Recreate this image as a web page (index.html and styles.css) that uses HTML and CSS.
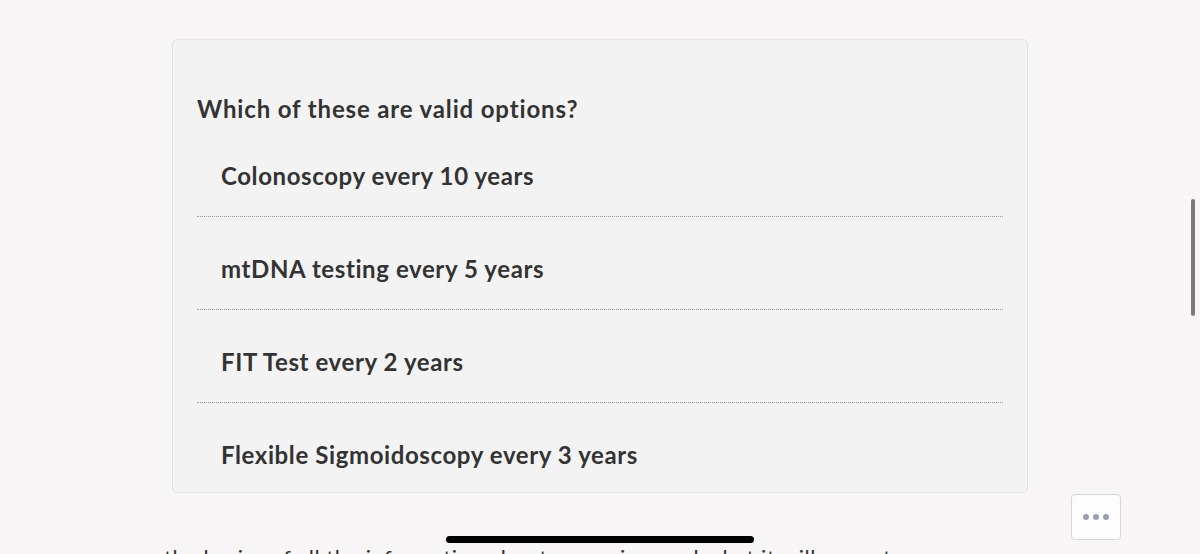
FILE: index.html
```html
<!DOCTYPE html>
<html lang="en">
<head>
<meta charset="utf-8">
<title>Quiz</title>
<link rel="stylesheet" href="styles.css">
</head>
<body>
<main class="page">
  <section class="card">
    <h2 class="question">Which of these are valid options?</h2>
    <ul class="options">
      <li class="option">Colonoscopy every 10 years</li>
      <li class="option">mtDNA testing every 5 years</li>
      <li class="option">FIT Test every 2 years</li>
      <li class="option">Flexible Sigmoidoscopy every 3 years</li>
    </ul>
  </section>
  <div class="below">
    <p class="body-text">the basics of all the information about screening, and what it will mean to you</p>
    <button class="more" type="button" aria-label="More">
      <span class="dot"></span><span class="dot"></span><span class="dot"></span>
    </button>
  </div>
</main>
<div class="scrollbar"></div>
<div class="home-indicator"></div>
</body>
</html>
```

FILE: styles.css
```css
html, body {
  margin: 0;
  padding: 0;
  height: 100%;
  overflow: hidden;
}
body {
  background: #f7f5f5;
  font-family: "Lato", "Liberation Sans", sans-serif;
  color: #333333;
}
.page {
  padding: 39px 0 0 172px;
  width: 856px;
}
.card {
  background: #f3f3f3;
  border: 1px solid #e2e4e4;
  border-radius: 5px;
  padding: 54px 24px 0 24px;
  box-sizing: border-box;
  height: 454px;
}
.question {
  margin: 0;
  font-size: 24px;
  line-height: 30px;
  font-weight: 700;
  letter-spacing: 0.85px;
}
.options {
  list-style: none;
  margin: 0;
  padding: 0;
}
.option {
  padding: 36px 24px 25px 24px;
  font-size: 24px;
  line-height: 31px;
  font-weight: 700;
  letter-spacing: 0.6px;
  border-bottom: 1px dotted #9a9a9a;
}
.option:last-child {
  border-bottom: none;
}
.below {
  display: flex;
  justify-content: space-between;
  align-items: flex-start;
  position: relative;
}
.body-text {
  margin: 50px 0 0 -8px;
  font-size: 22px;
  line-height: 30px;
  white-space: nowrap;
  letter-spacing: 0.5px;
}
.more {
  position: absolute;
  right: -93px;
  top: 1px;
  width: 50px;
  height: 46px;
  background: #fdfdfd;
  border: 1px solid #d6d7dc;
  border-radius: 4px;
  display: flex;
  align-items: center;
  justify-content: center;
  gap: 4px;
  padding: 0;
}
.dot {
  width: 6px;
  height: 6px;
  border-radius: 50%;
  background: #98a0b2;
}
.scrollbar {
  position: fixed;
  left: 1191px;
  top: 199px;
  width: 4px;
  height: 117px;
  border-radius: 2px;
  background: #7a7a7a;
}
.home-indicator {
  position: fixed;
  left: 446px;
  top: 536px;
  width: 308px;
  height: 7px;
  border-radius: 4px;
  background: #000;
}
```
